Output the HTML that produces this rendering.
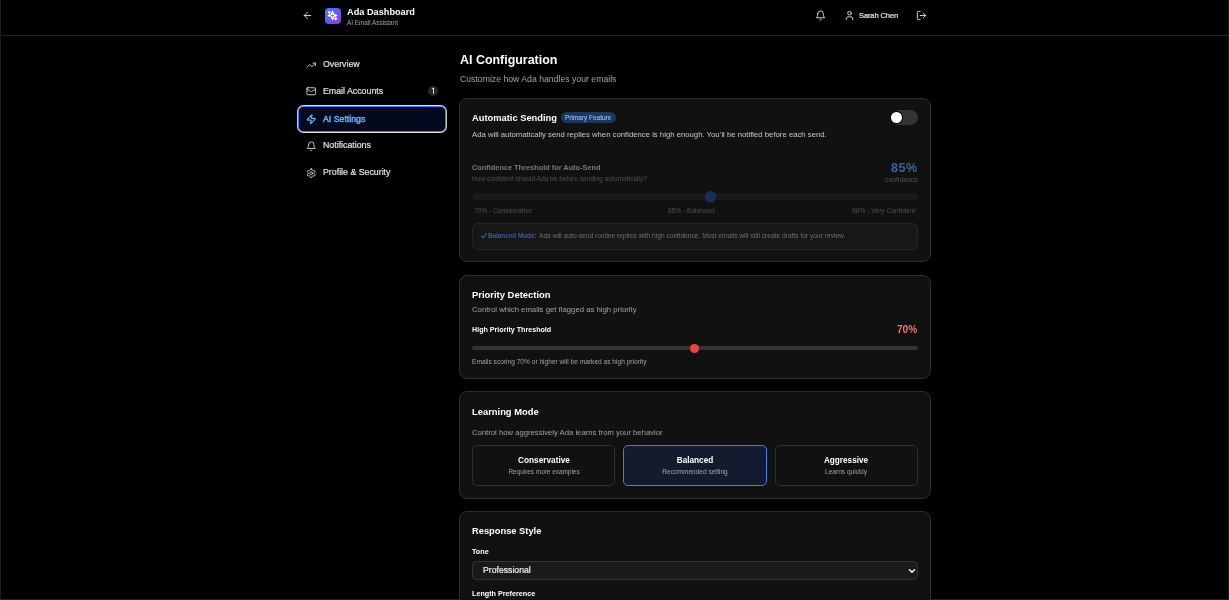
<!DOCTYPE html>
<html>
<head>
<meta charset="utf-8">
<style>
html,body{margin:0;padding:0;background:#000;}
body{width:1229px;height:600px;position:relative;overflow:hidden;font-family:"Liberation Sans",sans-serif;color:#fff;}
.frame{position:absolute;left:0;top:0;width:1227px;height:599px;border-left:1px solid #1c1c1c;border-right:1px solid #1c1c1c;border-bottom:1px solid #222;}
.hdr-line{position:absolute;left:1px;top:35px;width:1227px;height:1px;background:#242424;}
.t{position:absolute;line-height:1;white-space:nowrap;will-change:transform;}
svg.i{position:absolute;fill:none;stroke:currentColor;stroke-linecap:round;stroke-linejoin:round;}
.card{position:absolute;left:459px;width:470px;background:#111;border:1px solid #2e2e2e;border-radius:8px;box-sizing:content-box;}
.logo{position:absolute;left:324.6px;top:7.8px;width:16px;height:16px;border-radius:4px;background:linear-gradient(135deg,#3b82f6,#9333ea);}
.navact{position:absolute;left:298px;top:106.2px;width:148.3px;height:25.4px;box-sizing:border-box;border:1.3px solid #2f7dfb;border-radius:5.5px;background:#030a1d;box-shadow:0 0 0 0.9px #e6e2d6;}
.badge{position:absolute;left:428px;top:86px;width:10px;height:10px;border-radius:50%;background:#262626;}
.pill{position:absolute;left:561px;top:112px;width:55px;height:11px;box-sizing:border-box;border-radius:6px;background:#1c365c;}
.toggle{position:absolute;left:890px;top:110px;width:28px;height:15px;border-radius:8px;background:#333;}
.knob{position:absolute;left:891.3px;top:112px;width:10.8px;height:10.8px;border-radius:50%;background:#fff;box-shadow:0 0 0 1px #000;}
.track1{position:absolute;left:472px;top:193px;width:446px;height:7px;border-radius:4px;background:#1a1a1a;}
.thumb1{position:absolute;left:705px;top:191px;width:11px;height:11px;border-radius:50%;background:#1a3058;box-shadow:0 1px 3px rgba(30,58,110,0.25);}
.note{position:absolute;left:472px;top:223px;width:444px;height:25px;border:1px solid #252525;border-radius:6px;background:#171717;}
.track2{position:absolute;left:472px;top:346px;width:446px;height:4px;border-radius:2px;background:#333;}
.thumb2{position:absolute;left:690px;top:343.5px;width:9px;height:9px;border-radius:50%;background:#ef4444;}
.opt{position:absolute;top:445px;width:143.4px;height:41px;box-sizing:border-box;border:1px solid #2e2e2e;border-radius:5px;background:#111;}
.opt.act{border:1.5px solid #3b82f6;background:#131c2e;}
.sel{position:absolute;left:472px;top:561px;width:444px;height:17px;border:1px solid #333;border-radius:4px;background:#1a1a1a;}

</style>
</head>
<body>
<div class="frame"></div>
<div class="hdr-line"></div>
<div class="logo"></div>
<div class="navact"></div>
<div class="badge"></div>
<svg style="position:absolute;left:428px;top:86px" width="10" height="10" viewBox="0 0 10 10"><path d="M3.9 2.9 L5.5 1.9 V7.8" fill="none" stroke="#dcdcdc" stroke-width="1" stroke-linejoin="round"/></svg>
<div class="card" style="top:98px;height:162px"></div>
<div class="pill"></div>
<div class="toggle"></div><div class="knob"></div>
<div class="track1"></div>
<div class="thumb1"></div>
<div class="note"></div>
<svg style="position:absolute;left:477.6px;top:230px" width="12" height="12" viewBox="0 0 12 12"><path d="M3.6 6.1 L5.2 7.9 L8.3 3.6" fill="none" stroke="#3d62a0" stroke-width="1.05" stroke-linecap="round" stroke-linejoin="round"/></svg>
<div class="card" style="top:275px;height:102px"></div>
<div class="track2"></div>
<div class="thumb2"></div>
<div class="card" style="top:391px;height:106px"></div>
<div class="opt" style="left:472px"></div>
<div class="opt act" style="left:623.3px"></div>
<div class="opt" style="left:774.6px"></div>
<div class="card" style="top:511px;height:120px"></div>
<div class="sel"></div>

<svg class="i" style="left:301.65px;top:9.95px;color:#e5e5e5;stroke-width:2" width="11" height="11" viewBox="0 0 24 24"><path d="m12 19-7-7 7-7"/><path d="M19 12H5"/></svg>
<svg class="i" style="left:327.10px;top:10.10px;color:#ffffff;stroke-width:2.9" width="11" height="11" viewBox="0 0 24 24"><path d="m12 3-1.912 5.813a2 2 0 0 1-1.275 1.275L3 12l5.813 1.912a2 2 0 0 1 1.275 1.275L12 21l1.912-5.813a2 2 0 0 1 1.275-1.275L21 12l-5.813-1.912a2 2 0 0 1-1.275-1.275L12 3Z"/><path d="M5 3v4"/><path d="M19 17v4"/><path d="M3 5h4"/><path d="M17 19h4"/></svg>
<svg class="i" style="left:815.10px;top:9.50px;color:#e5e5e5;stroke-width:2" width="11" height="11" viewBox="0 0 24 24"><path d="M6 8a6 6 0 0 1 12 0c0 7 3 9 3 9H3s3-2 3-9"/><path d="M10.3 21a1.94 1.94 0 0 0 3.4 0"/></svg>
<svg class="i" style="left:843.90px;top:10.10px;color:#e5e5e5;stroke-width:2" width="11" height="11" viewBox="0 0 24 24"><path d="M19 21v-2a4 4 0 0 0-4-4H9a4 4 0 0 0-4 4v2"/><circle cx="12" cy="7" r="4"/></svg>
<svg class="i" style="left:916.00px;top:9.85px;color:#e5e5e5;stroke-width:2" width="11" height="11" viewBox="0 0 24 24"><path d="M9 21H5a2 2 0 0 1-2-2V5a2 2 0 0 1 2-2h4"/><polyline points="16 17 21 12 16 7"/><line x1="21" x2="9" y1="12" y2="12"/></svg>
<svg class="i" style="left:305.75px;top:59.55px;color:#d9d9d9;stroke-width:2.1" width="10.5" height="10.5" viewBox="0 0 24 24"><polyline points="22 7 13.5 15.5 8.5 10.5 2 17"/><polyline points="16 7 22 7 22 13"/></svg>
<svg class="i" style="left:305.75px;top:85.60px;color:#d9d9d9;stroke-width:2.1" width="10.5" height="10.5" viewBox="0 0 24 24"><rect width="20" height="16" x="2" y="4" rx="2"/><path d="m22 7-8.97 5.7a1.94 1.94 0 0 1-2.06 0L2 7"/></svg>
<svg class="i" style="left:306.25px;top:114.05px;color:#6aaefc;stroke-width:2.5" width="10.5" height="10.5" viewBox="0 0 24 24"><path d="M4 14a1 1 0 0 1-.78-1.63l9.9-10.2a.5.5 0 0 1 .86.46l-1.92 6.02A1 1 0 0 0 13 10h7a1 1 0 0 1 .78 1.63l-9.9 10.2a.5.5 0 0 1-.86-.46l1.92-6.02A1 1 0 0 0 11 14z"/></svg>
<svg class="i" style="left:305.75px;top:140.85px;color:#d9d9d9;stroke-width:2.1" width="10.5" height="10.5" viewBox="0 0 24 24"><path d="M6 8a6 6 0 0 1 12 0c0 7 3 9 3 9H3s3-2 3-9"/><path d="M10.3 21a1.94 1.94 0 0 0 3.4 0"/></svg>
<svg class="i" style="left:305.75px;top:167.65px;color:#d9d9d9;stroke-width:2.1" width="10.5" height="10.5" viewBox="0 0 24 24"><path d="M12.22 2h-.44a2 2 0 0 0-2 2v.18a2 2 0 0 1-1 1.73l-.43.25a2 2 0 0 1-2 0l-.15-.08a2 2 0 0 0-2.73.73l-.22.38a2 2 0 0 0 .73 2.73l.15.1a2 2 0 0 1 1 1.72v.51a2 2 0 0 1-1 1.74l-.15.09a2 2 0 0 0-.73 2.73l.22.38a2 2 0 0 0 2.73.73l.15-.08a2 2 0 0 1 2 0l.43.25a2 2 0 0 1 1 1.73V20a2 2 0 0 0 2 2h.44a2 2 0 0 0 2-2v-.18a2 2 0 0 1 1-1.73l.43-.25a2 2 0 0 1 2 0l.15.08a2 2 0 0 0 2.73-.73l.22-.39a2 2 0 0 0-.73-2.73l-.15-.08a2 2 0 0 1-1-1.74v-.5a2 2 0 0 1 1-1.74l.15-.09a2 2 0 0 0 .73-2.73l-.22-.38a2 2 0 0 0-2.73-.73l-.15.08a2 2 0 0 1-2 0l-.43-.25a2 2 0 0 1-1-1.73V4a2 2 0 0 0-2-2z"/><circle cx="12" cy="12" r="3"/></svg>
<svg class="i" style="left:907.00px;top:565.80px;color:#ffffff;stroke-width:3.6" width="10" height="10" viewBox="0 0 24 24"><path d="m6 9 6 6 6-6"/></svg>
<div class="t" style="top:8px;font-size:9.2px;color:#ffffff;font-weight:700;left:347px;">Ada Dashboard</div>
<div class="t" style="top:20px;font-size:6.37px;color:#a3a3a3;left:347px;">AI Email Assistant</div>
<div class="t" style="top:12px;font-size:7.5px;color:#e5e5e5;left:858.6px;letter-spacing:-0.1px;-webkit-text-stroke:0.2px #e5e5e5">Sarah Chen</div>
<div class="t" style="top:60px;font-size:8.8px;color:#e0e0e0;left:322.5px;-webkit-text-stroke:0.2px #e0e0e0">Overview</div>
<div class="t" style="top:87px;font-size:8.8px;color:#e0e0e0;left:322.5px;-webkit-text-stroke:0.2px #e0e0e0">Email Accounts</div>
<div class="t" style="top:115px;font-size:8.75px;color:#6aaefc;left:323px;-webkit-text-stroke:0.45px #6aaefc">AI Settings</div>
<div class="t" style="top:141px;font-size:8.8px;color:#e0e0e0;left:322.5px;-webkit-text-stroke:0.2px #e0e0e0">Notifications</div>
<div class="t" style="top:168px;font-size:8.8px;color:#e0e0e0;left:322.5px;-webkit-text-stroke:0.2px #e0e0e0">Profile &amp; Security</div>
<div class="t" style="top:54px;font-size:12.45px;color:#ffffff;font-weight:700;left:459.5px;">AI Configuration</div>
<div class="t" style="top:75px;font-size:8.7px;color:#a3a3a3;left:459.5px;">Customize how Ada handles your emails</div>
<div class="t" style="top:114px;font-size:9.33px;color:#ffffff;font-weight:700;left:472px;">Automatic Sending</div>
<div class="t" style="top:115px;font-size:6.46px;color:#8fb9f2;left:565px;-webkit-text-stroke:0.15px #8fb9f2">Primary Feature</div>
<div class="t" style="top:131px;font-size:7.74px;color:#c8c8c8;left:471.6px;">Ada will automatically send replies when confidence is high enough. You’ll be notified before each send.</div>
<div class="t" style="top:164px;font-size:7.36px;color:#7a7a7a;font-weight:700;left:472px;">Confidence Threshold for Auto-Send</div>
<div class="t" style="top:176px;font-size:6.6px;color:#4f4f4f;left:472px;">How confident should Ada be before sending automatically?</div>
<div class="t" style="top:162px;font-size:12.6px;color:#3b62a0;font-weight:700;right:311.70000000000005px;letter-spacing:0.5px;margin-right:-0.5px">85%</div>
<div class="t" style="top:177px;font-size:6.82px;color:#555555;right:311.20000000000005px;">confidence</div>
<div class="t" style="top:208px;font-size:6.65px;color:#505050;left:474px;">70% - Conservative</div>
<div class="t" style="top:208px;font-size:6.6px;color:#505050;right:514px;">85% - Balanced</div>
<div class="t" style="top:208px;font-size:6.7px;color:#505050;right:313.4px;">98% - Very Confident</div>
<div class="t" style="top:233px;font-size:6.33px;color:#3b5f9a;font-weight:700;left:488.1px;">Balanced Mode:</div>
<div class="t" style="top:233px;font-size:6.64px;color:#6f6f6f;left:538.5px;">Ada will auto-send routine replies with high confidence. Most emails will still create drafts for your review.</div>
<div class="t" style="top:290px;font-size:9.43px;color:#ffffff;font-weight:700;left:471.7px;">Priority Detection</div>
<div class="t" style="top:306px;font-size:7.76px;color:#a3a3a3;left:472px;">Control which emails get flagged as high priority</div>
<div class="t" style="top:327px;font-size:7.14px;color:#ffffff;font-weight:700;left:472px;">High Priority Threshold</div>
<div class="t" style="top:325px;font-size:10.09px;color:#f87171;font-weight:700;right:311.79999999999995px;">70%</div>
<div class="t" style="top:359px;font-size:6.6px;color:#a3a3a3;left:472px;">Emails scoring 70% or higher will be marked as high priority</div>
<div class="t" style="top:407px;font-size:9.39px;color:#ffffff;font-weight:700;left:471.9px;">Learning Mode</div>
<div class="t" style="top:429px;font-size:7.7px;color:#a3a3a3;left:472px;">Control how aggressively Ada learns from your behavior</div>
<div class="t" style="top:457px;font-size:8.25px;color:#ffffff;font-weight:700;left:443.70000000000005px;width:200px;text-align:center;">Conservative</div>
<div class="t" style="top:469px;font-size:6.42px;color:#a3a3a3;left:443.5px;width:200px;text-align:center;">Requires more examples</div>
<div class="t" style="top:457px;font-size:8.21px;color:#ffffff;font-weight:700;left:595px;width:200px;text-align:center;">Balanced</div>
<div class="t" style="top:469px;font-size:6.54px;color:#a3a3a3;left:594.8px;width:200px;text-align:center;">Recommended setting</div>
<div class="t" style="top:457px;font-size:8.2px;color:#ffffff;font-weight:700;left:746px;width:200px;text-align:center;">Aggressive</div>
<div class="t" style="top:469px;font-size:6.57px;color:#a3a3a3;left:746px;width:200px;text-align:center;">Learns quickly</div>
<div class="t" style="top:527px;font-size:9.32px;color:#ffffff;font-weight:700;left:471.9px;">Response Style</div>
<div class="t" style="top:548px;font-size:7.22px;color:#ffffff;font-weight:700;left:472px;">Tone</div>
<div class="t" style="top:566px;font-size:8.69px;color:#f0f0f0;left:482.7px;-webkit-text-stroke:0.2px #f0f0f0">Professional</div>
<div class="t" style="top:590px;font-size:7.21px;color:#ffffff;font-weight:700;left:472px;">Length Preference</div>
</body>
</html>
